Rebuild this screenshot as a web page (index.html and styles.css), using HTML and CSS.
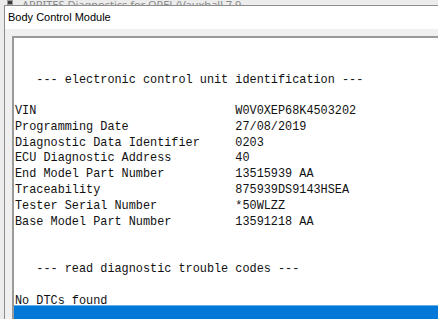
FILE: index.html
```html
<!DOCTYPE html>
<html lang="en">
<head>
    <meta charset="UTF-8">
    <meta name="viewport" content="width=device-width, initial-scale=1.0">
    <title>Body Control Module</title>
    <link rel="stylesheet" href="styles.css">
</head>
<body>
    <!-- Main window, mostly hidden behind the dialog -->
    <div class="app-title">
        <span class="app-icon"></span>
        <span class="app-name">APRITES Diagnostics for OPEL/Vauxhall 7.9</span>
    </div>

    <div class="dialog">
        <div class="dialog-title">Body Control Module</div>
        <div class="dialog-body">
            <div class="report">
<pre class="report-text">


   --- electronic control unit identification ---

VIN                            W0V0XEP68K4503202
Programming Date               27/08/2019
Diagnostic Data Identifier     0203
ECU Diagnostic Address         40
End Model Part Number          13515939 AA
Traceability                   875939DS9143HSEA
Tester Serial Number           *50WLZZ
Base Model Part Number         13591218 AA


   --- read diagnostic trouble codes ---

No DTCs found</pre>
                <div class="selection-bar"></div>
            </div>
        </div>
    </div>
</body>
</html>
```

FILE: styles.css
```css
/* Global Reset */
* {
    margin: 0;
    padding: 0;
    box-sizing: border-box;
}

body {
    width: 438px;
    height: 319px;
    overflow: hidden;
    background-color: #ececec;
    font-family: "Liberation Sans", Arial, sans-serif;
    display: flex;
    flex-direction: column;
}

/* Strip of the main window title */
.app-title {
    height: 5px;
    overflow: hidden;
    display: flex;
    align-items: flex-start;
    gap: 9px;
    padding-left: 7px;
    background-color: #ececec;
}

.app-icon {
    width: 6px;
    height: 5px;
    background-color: #3a3a3a;
    border: 1px solid #9a9a9a;
    flex-shrink: 0;
}

.app-name {
    font-family: "Noto Sans", sans-serif;
    font-size: 11px;
    line-height: 5px;
    padding-top: 2px;
    color: #8a8a8a;
    white-space: nowrap;
}

/* Dialog window */
.dialog {
    flex: 1;
    margin-left: 4px;
    border-left: 1px solid #8c8c8c;
    border-top: 1px solid #8c8c8c;
    display: flex;
    flex-direction: column;
    min-height: 0;
}

.dialog-title {
    height: 23px;
    background-color: #fff;
    padding-left: 3px;
    font-size: 11px;
    line-height: 22px;
    color: #000;
    white-space: nowrap;
}

.dialog-body {
    flex: 1;
    background-color: #f0f0f0;
    padding: 7px 0 0 7px;
    display: flex;
    min-height: 0;
}

.report {
    flex: 1;
    background-color: #fff;
    border-top: 2px solid #9a9a9a;
    border-left: 2px solid #9a9a9a;
    display: flex;
    flex-direction: column;
    min-height: 0;
}

.report-text {
    font-family: "Liberation Mono", "Courier New", monospace;
    font-size: 11.85px;
    line-height: 15.78px;
    color: #111;
    padding: 3px 0 0 1px;
    height: 267px;
}

.selection-bar {
    flex: 1;
    position: relative;
    background-color: #0078d7;
    border-top: 1px solid #68aee6;
}
```
